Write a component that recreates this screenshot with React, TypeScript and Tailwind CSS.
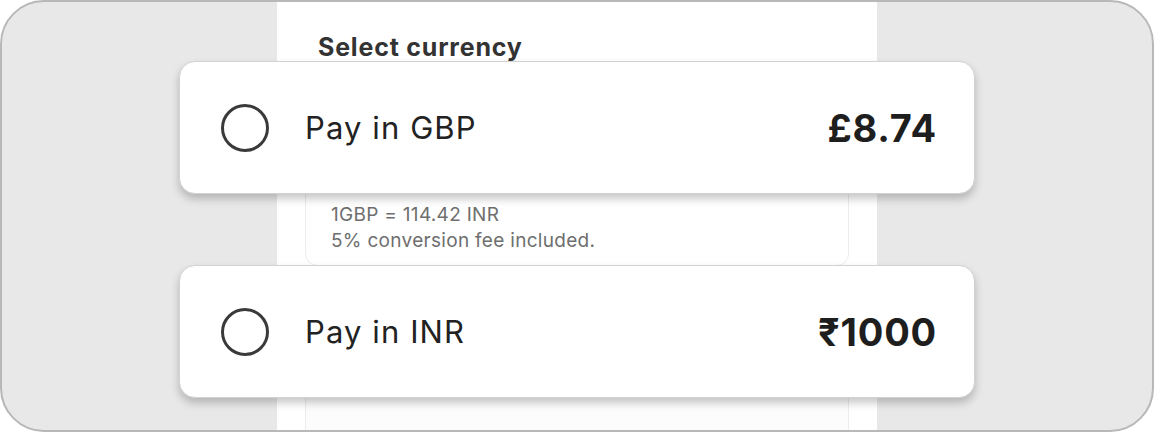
import React from "react";

function Radio() {
  return (
    <div className="w-[48px] h-[48px] rounded-full border-[3px] border-[#3a3a3a] shrink-0" />
  );
}

function OptionCard({ label, amount }: { label: string; amount: string }) {
  return (
    <div className="relative z-10 mx-[-98px] h-[133px] shrink-0 rounded-[16px] border border-[#d2d2d2] bg-white shadow-[0_5px_9px_rgba(0,0,0,0.22)] flex items-center pl-[41px] pr-[37px]">
      <Radio />
      <div className="ml-[36px] text-[31px] tracking-[1.1px] text-[#222] leading-none">{label}</div>
      <div className="ml-auto text-[38px] tracking-[0.8px] font-bold text-[#1e1e1e] leading-none">{amount}</div>
    </div>
  );
}

export default function App() {
  return (
    <div
      className="w-[1154px] h-[432px] rounded-[44px] border-2 border-[#b8b8b8] bg-[#e8e8e8] overflow-hidden"
      style={{ fontFamily: "Inter, 'Noto Sans', sans-serif" }}
    >
      <div className="mx-auto w-[600px] h-full bg-white flex flex-col">
        <div className="h-[59px] shrink-0 pt-[33px] pl-[41px]">
          <div className="text-[25px] tracking-[0.8px] font-bold leading-none text-[#333]">Select currency</div>
        </div>
        <OptionCard label="Pay in GBP" amount="£8.74" />
        <div className="mx-[28px] mt-[-20px] mb-[-1px] h-[92px] shrink-0 rounded-[12px] border border-[#ececec] pt-[27px] pl-[25px] text-[19px] tracking-[0.3px] leading-[26px] text-[#6e6e6e]">
          <div>1GBP = 114.42 INR</div>
          <div>5% conversion fee included.</div>
        </div>
        <OptionCard label="Pay in INR" amount="₹1000" />
        <div className="mx-[28px] mt-[-20px] h-[80px] shrink-0 rounded-[12px] border border-[#ececec] bg-[#fcfcfc]" />
      </div>
    </div>
  );
}
